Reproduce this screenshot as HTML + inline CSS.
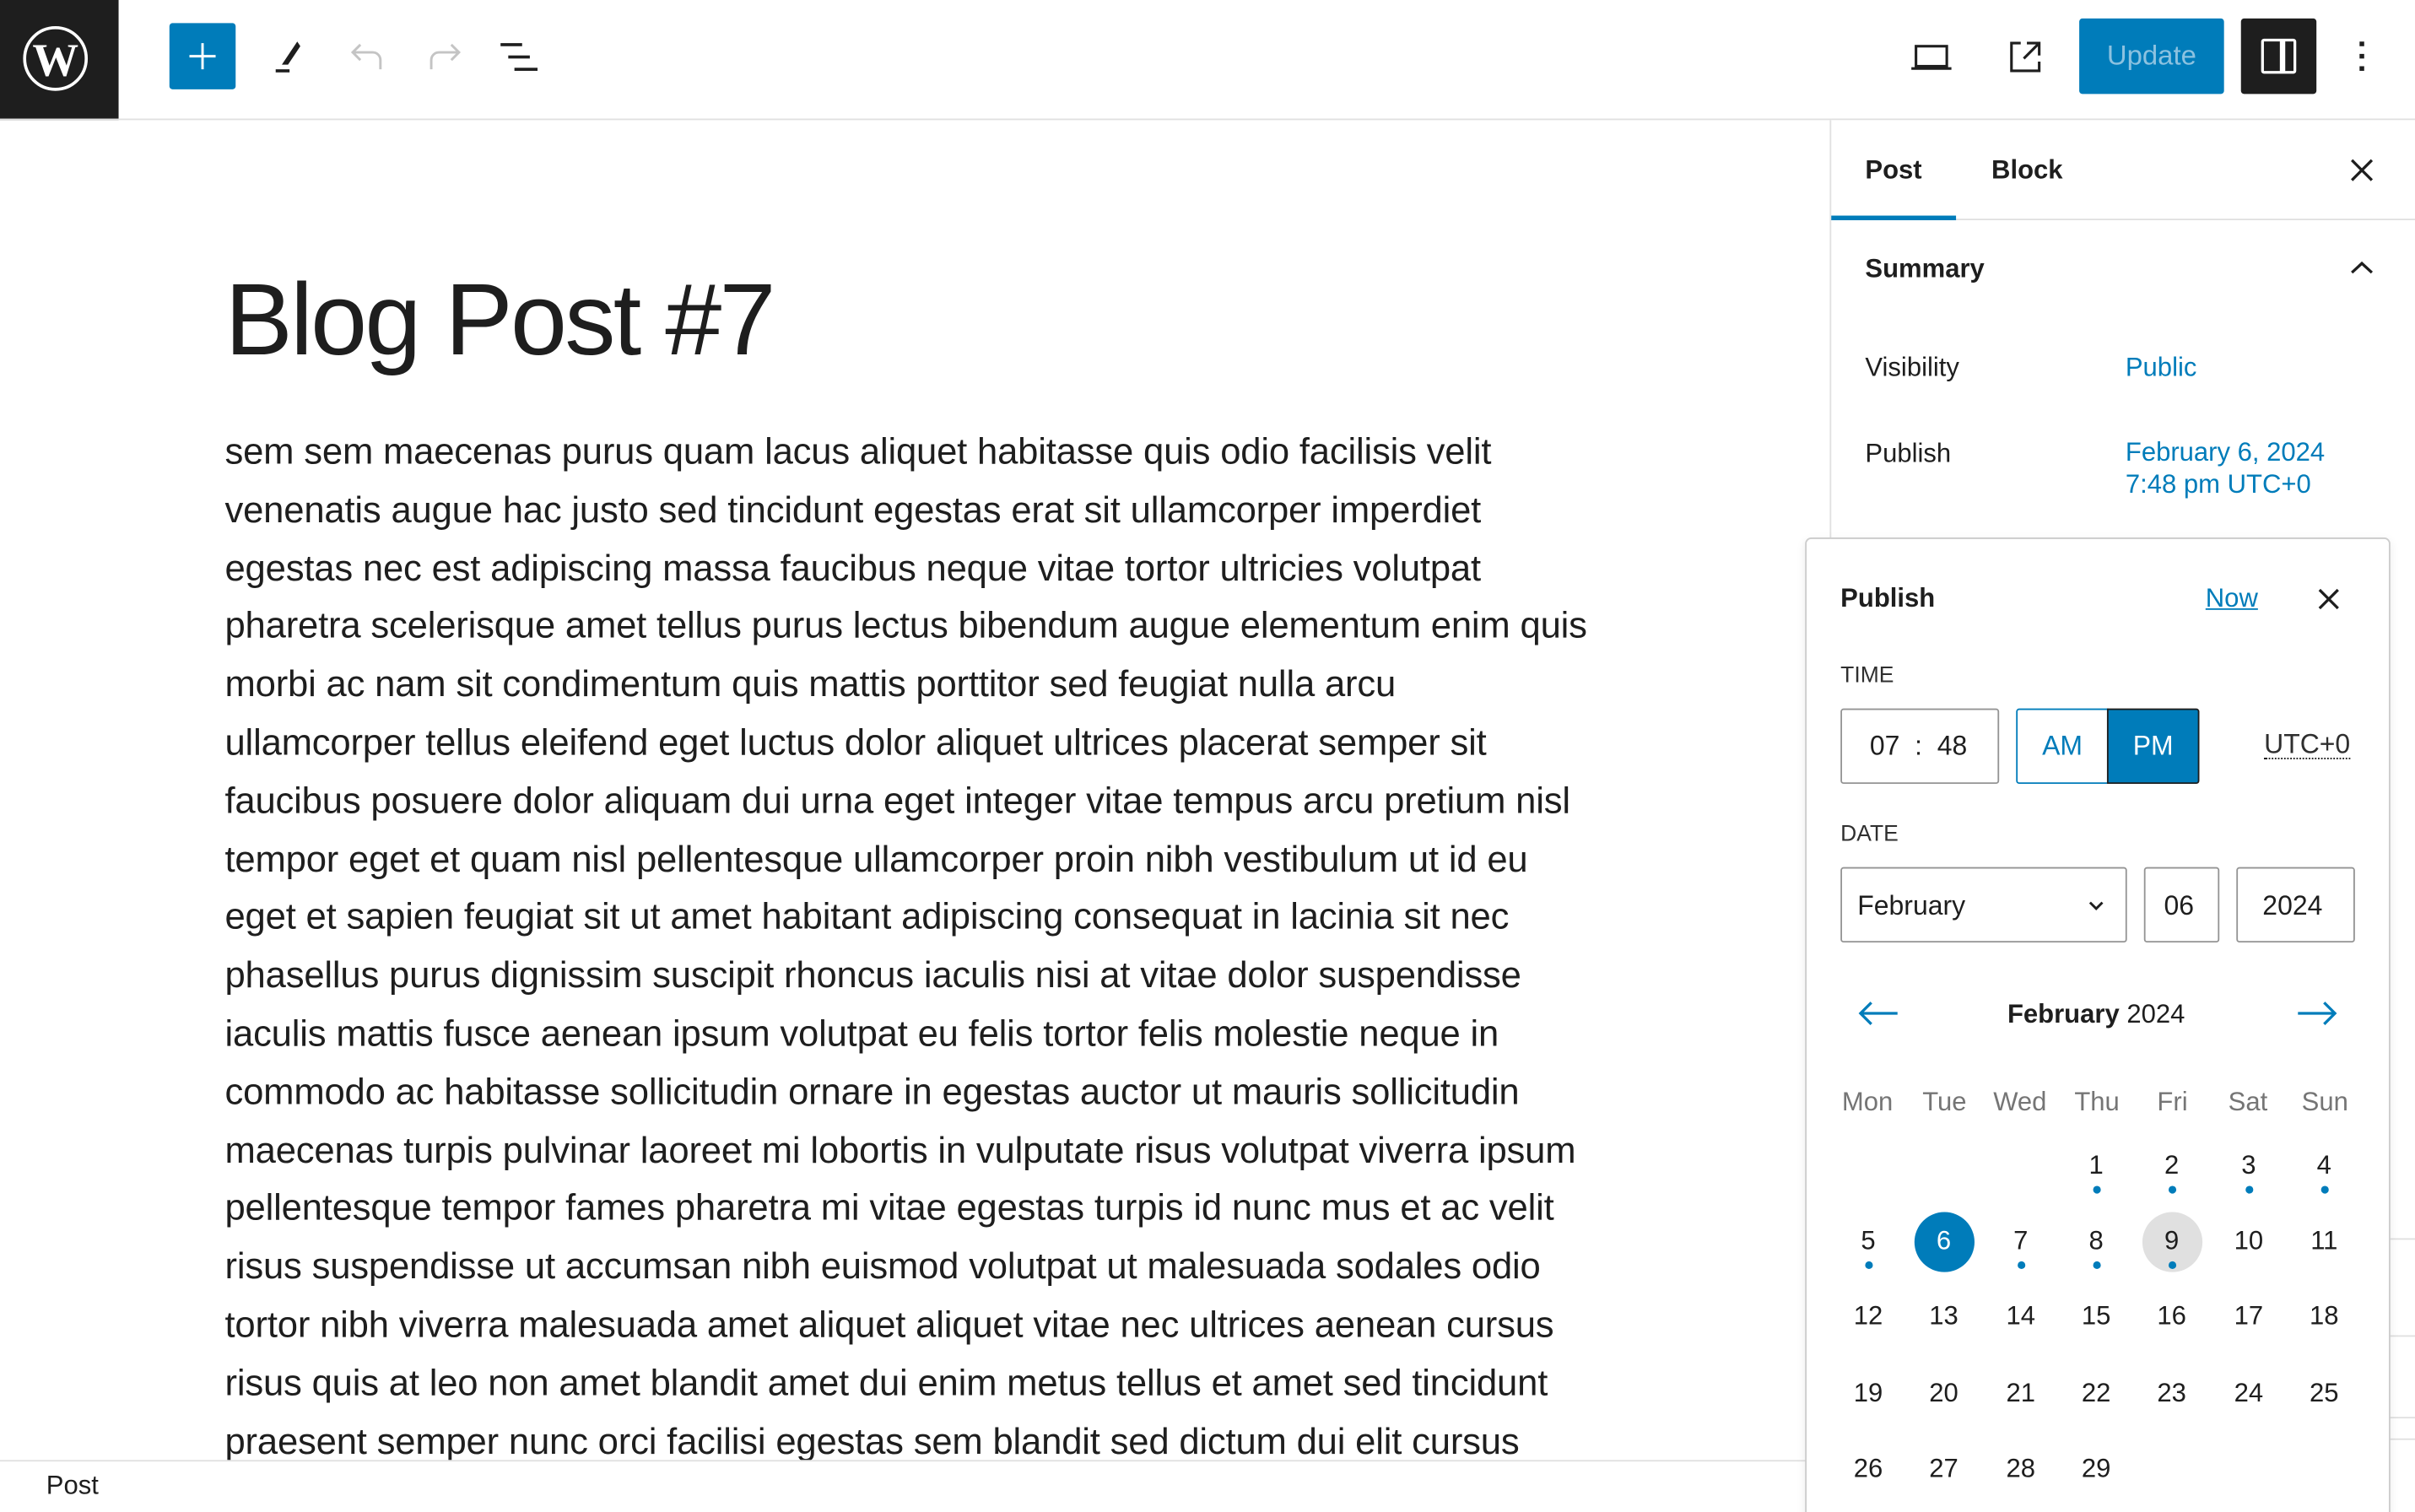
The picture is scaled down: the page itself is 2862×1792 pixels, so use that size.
<!DOCTYPE html>
<html><head><meta charset="utf-8"><style>
*{box-sizing:border-box;margin:0;padding:0}
html,body{width:2862px;height:1792px;max-height:1792px;overflow:hidden;background:#fff}
#w{position:absolute;left:0;top:0;width:2862px;height:1792px;overflow:hidden}
#s{position:absolute;left:0;top:0;width:1568px;height:982px;overflow:hidden;transform:scale(1.82526);transform-origin:0 0;font-family:"Liberation Sans",sans-serif;color:#1e1e1e}
.a{position:absolute}
.t{position:absolute;white-space:nowrap;font-size:17px;line-height:20px}
.b{font-weight:bold}
.blue{color:#007cba}
.box{position:absolute;border:1px solid #949494;border-radius:2px;background:#fff}
.body p{font-size:23.9px;line-height:37.8px;white-space:nowrap;letter-spacing:-0.1px}
.wd{position:absolute;width:49px;text-align:center;color:#757575;font-size:17px;top:706px}
.d{position:absolute;width:40px;text-align:center;font-size:17px;line-height:20px}
.dot{position:absolute;width:5px;height:5px;border-radius:50%;background:#007cba}
</style></head><body><div id="w"><div id="s">
<div class="a" style="left:0;top:0;width:77px;height:78px;background:#1e1e1e"></div>
<svg class="a" style="left:14px;top:16px" width="44" height="44" viewBox="0 0 44 44"><circle cx="22" cy="22" r="20" fill="none" stroke="#fff" stroke-width="2"/><text x="22" y="33" font-family="Liberation Serif" font-size="30" font-weight="bold" fill="#fff" text-anchor="middle">W</text></svg>
<div class="a" style="left:0;top:77px;width:1568px;height:1px;background:#e0e0e0"></div>
<div class="a" style="left:110px;top:15px;width:43px;height:43px;background:#007cba;border-radius:2px"></div>
<svg class="a" style="left:110px;top:15px" width="43" height="43"><path d="M21.5 13v17M13 21.5h17" stroke="#fff" stroke-width="1.6"/></svg>
<svg class="a" style="left:176px;top:25px" width="24" height="24"><path d="M17 2l2 3-8 12-4 0z" fill="#1e1e1e"/><rect x="3" y="20" width="9" height="2" fill="#1e1e1e"/></svg>
<svg class="a" style="left:226px;top:25px" width="26" height="24" fill="none" stroke="#c4c4c4" stroke-width="1.6"><path d="M8 4L3 9l5 5M3 9h13a5 5 0 0 1 5 5v6"/></svg>
<svg class="a" style="left:275px;top:25px" width="26" height="24" fill="none" stroke="#c4c4c4" stroke-width="1.6"><path d="M18 4l5 5-5 5M23 9H10a5 5 0 0 0-5 5v6"/></svg>
<svg class="a" style="left:323px;top:26px" width="28" height="22" fill="#1e1e1e"><rect x="2" y="2" width="14" height="2"/><rect x="7" y="10" width="14" height="2"/><rect x="11" y="18" width="15" height="2"/></svg>
<svg class="a" style="left:1240px;top:25px" width="28" height="24" fill="none" stroke="#1e1e1e" stroke-width="1.7"><rect x="4" y="5" width="20" height="13"/><path d="M1 19.5h26"/></svg>
<svg class="a" style="left:1302px;top:24px" width="26" height="26" fill="none" stroke="#1e1e1e" stroke-width="1.7"><path d="M10 4H4v18h18v-6M14 4h8v8M22 4l-10 10"/></svg>
<div class="a" style="left:1350px;top:12px;width:94px;height:49px;background:#007cba;border-radius:2px;color:#8cc2e0;font-size:18px;text-align:center;line-height:49px">Update</div>
<div class="a" style="left:1455px;top:12px;width:49px;height:49px;background:#1e1e1e;border-radius:2px"></div>
<svg class="a" style="left:1455px;top:12px" width="49" height="49" fill="none" stroke="#fff" stroke-width="1.8"><rect x="14" y="14" width="21" height="21" rx="1"/><path d="M27 14v21" stroke-width="3.5"/></svg>
<svg class="a" style="left:1526px;top:24px" width="14" height="26" fill="#1e1e1e"><rect x="6" y="3" width="3" height="3"/><rect x="6" y="11" width="3" height="3"/><rect x="6" y="19" width="3" height="3"/></svg>

<div class="a" style="left:146px;top:167px;font-size:66px;line-height:80px;letter-spacing:-1.5px;white-space:nowrap">Blog Post #7</div>
<div class="a body" style="left:146px;top:275px">
<p>sem sem maecenas purus quam lacus aliquet habitasse quis odio facilisis velit</p>
<p>venenatis augue hac justo sed tincidunt egestas erat sit ullamcorper imperdiet</p>
<p>egestas nec est adipiscing massa faucibus neque vitae tortor ultricies volutpat</p>
<p>pharetra scelerisque amet tellus purus lectus bibendum augue elementum enim quis</p>
<p>morbi ac nam sit condimentum quis mattis porttitor sed feugiat nulla arcu</p>
<p>ullamcorper tellus eleifend eget luctus dolor aliquet ultrices placerat semper sit</p>
<p>faucibus posuere dolor aliquam dui urna eget integer vitae tempus arcu pretium nisl</p>
<p>tempor eget et quam nisl pellentesque ullamcorper proin nibh vestibulum ut id eu</p>
<p>eget et sapien feugiat sit ut amet habitant adipiscing consequat in lacinia sit nec</p>
<p>phasellus purus dignissim suscipit rhoncus iaculis nisi at vitae dolor suspendisse</p>
<p>iaculis mattis fusce aenean ipsum volutpat eu felis tortor felis molestie neque in</p>
<p>commodo ac habitasse sollicitudin ornare in egestas auctor ut mauris sollicitudin</p>
<p>maecenas turpis pulvinar laoreet mi lobortis in vulputate risus volutpat viverra ipsum</p>
<p>pellentesque tempor fames pharetra mi vitae egestas turpis id nunc mus et ac velit</p>
<p>risus suspendisse ut accumsan nibh euismod volutpat ut malesuada sodales odio</p>
<p>tortor nibh viverra malesuada amet aliquet aliquet vitae nec ultrices aenean cursus</p>
<p>risus quis at leo non amet blandit amet dui enim metus tellus et amet sed tincidunt</p>
<p>praesent semper nunc orci facilisi egestas sem blandit sed dictum dui elit cursus</p>
</div>
<div class="a" style="left:0;top:948px;width:1188px;height:34px;background:#fff;border-top:1px solid #e0e0e0"></div>
<div class="t" style="left:30px;top:955px">Post</div>

<div class="a" style="left:1188px;top:78px;width:380px;height:904px;background:#fff;border-left:1px solid #e0e0e0"></div>
<div class="a" style="left:1189px;top:142px;width:379px;height:1px;background:#e0e0e0"></div>
<div class="a" style="left:1189px;top:140px;width:81px;height:3px;background:#007cba"></div>
<div class="t" style="left:1211px;top:101px;font-weight:600">Post</div>
<div class="t" style="left:1293px;top:101px;font-weight:600">Block</div>
<svg class="a" style="left:1524px;top:101px" width="20" height="20" stroke="#1e1e1e" stroke-width="1.8"><path d="M3 3l13 13M16 3L3 16"/></svg>
<div class="t" style="left:1211px;top:165px;font-weight:600">Summary</div>
<svg class="a" style="left:1524px;top:166px" width="20" height="16" fill="none" stroke="#1e1e1e" stroke-width="1.8"><path d="M3 11l6.5-6 6.5 6"/></svg>
<div class="t" style="left:1211px;top:229px">Visibility</div>
<div class="t blue" style="left:1380px;top:229px">Public</div>
<div class="t" style="left:1211px;top:285px">Publish</div>
<div class="t blue" style="left:1380px;top:284px">February 6, 2024</div>
<div class="t blue" style="left:1380px;top:305px">7:48 pm UTC+0</div>
<div class="a" style="left:1551px;top:804px;width:17px;height:1px;background:#e0e0e0"></div>
<div class="a" style="left:1551px;top:867px;width:17px;height:1px;background:#e0e0e0"></div>
<div class="a" style="left:1551px;top:920px;width:17px;height:1px;background:#e0e0e0"></div>
<div class="a" style="left:1551px;top:934px;width:17px;height:1px;background:#e0e0e0"></div>

<div class="a" style="left:1172px;top:349px;width:380px;height:640px;background:#fff;border:1px solid #ccc;border-radius:4px;box-shadow:0 2px 6px rgba(0,0,0,.08)"></div>
<div class="t b" style="left:1195px;top:379px">Publish</div>
<div class="t blue" style="left:1432px;top:379px;text-decoration:underline">Now</div>
<svg class="a" style="left:1502px;top:379px" width="20" height="20" stroke="#1e1e1e" stroke-width="1.8"><path d="M4 4l12 12M16 4L4 16"/></svg>
<div class="t" style="left:1195px;top:429px;font-size:14.5px;color:#2f2f2f">TIME</div>
<div class="box" style="left:1195px;top:460px;width:103px;height:49px"></div>
<div class="t" style="left:1214px;top:474px;font-size:17.5px">07 &nbsp;: &nbsp;48</div>
<div class="a" style="left:1309px;top:460px;width:60px;height:49px;border:1px solid #007cba;border-radius:2px 0 0 2px;color:#007cba;font-size:17.5px;line-height:47px;text-align:center">AM</div>
<div class="a" style="left:1368px;top:460px;width:60px;height:49px;background:#007cba;border:1px solid #1e1e1e;border-radius:0 2px 2px 0;color:#fff;font-size:17.5px;line-height:47px;text-align:center">PM</div>
<div class="t" style="left:1470px;top:474px;font-size:17.5px;color:#2f2f2f;border-bottom:1px dotted #1e1e1e;line-height:18px">UTC+0</div>
<div class="t" style="left:1195px;top:532px;font-size:14.5px;color:#2f2f2f">DATE</div>
<div class="box" style="left:1195px;top:563px;width:186px;height:49px"></div>
<div class="t" style="left:1206px;top:578px;font-size:17.5px">February</div>
<svg class="a" style="left:1354px;top:581px" width="14" height="14" fill="none" stroke="#1e1e1e" stroke-width="1.6"><path d="M3 5l4 4 4-4"/></svg>
<div class="box" style="left:1392px;top:563px;width:49px;height:49px"></div>
<div class="t" style="left:1405px;top:578px;font-size:17.5px">06</div>
<div class="box" style="left:1452px;top:563px;width:77px;height:49px"></div>
<div class="t" style="left:1469px;top:578px;font-size:17.5px">2024</div>
<svg class="a" style="left:1206px;top:648px" width="28" height="20" fill="none" stroke="#007cba" stroke-width="1.8"><path d="M2 10h24M9 3L2 10l7 7"/></svg>
<svg class="a" style="left:1490px;top:648px" width="28" height="20" fill="none" stroke="#007cba" stroke-width="1.8"><path d="M2 10h24M19 3l7 7-7 7"/></svg>
<div class="t" style="left:1261px;top:649px;width:200px;text-align:center;font-size:17px"><b>February</b> 2024</div>
<div class="wd" style="left:1188px">Mon</div><div class="wd" style="left:1238px">Tue</div><div class="wd" style="left:1287px">Wed</div><div class="wd" style="left:1337px">Thu</div><div class="wd" style="left:1386px">Fri</div><div class="wd" style="left:1435px">Sat</div><div class="wd" style="left:1485px">Sun</div>
<div class="a" style="left:1243px;top:787px;width:39px;height:39px;border-radius:50%;background:#007cba"></div>
<div class="a" style="left:1391px;top:787px;width:39px;height:39px;border-radius:50%;background:#e0e0e0"></div>
<div id="cal"></div>
<script>
var xs=[1213,1262,1312,1361,1410,1460,1509],ys=[757,806,855,905,954],h='';
for(var d=1;d<=29;d++){var i=d+2,c=i%7,r=Math.floor(i/7);
h+='<div class="d" style="left:'+(xs[c]-20)+'px;top:'+(ys[r]-10)+'px;'+(d==6?'color:#fff':'')+'">'+d+'</div>';
if(d<=9&&d!=6)h+='<div class="dot" style="left:'+(xs[c]-2.5)+'px;top:'+(ys[r]+13)+'px"></div>';}
document.getElementById('cal').outerHTML=h;
</script>
</div></div></body></html>
